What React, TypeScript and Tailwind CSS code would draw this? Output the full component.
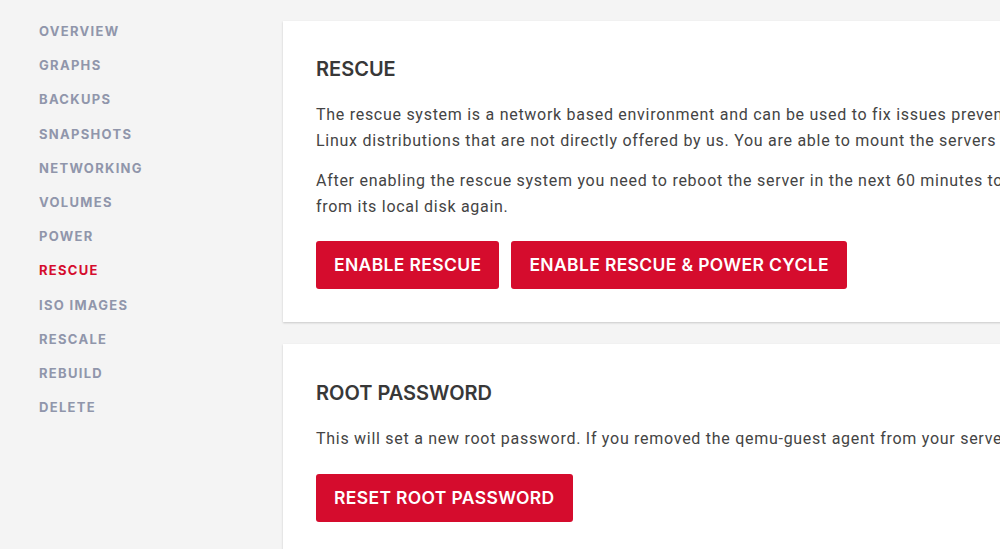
import React from "react";

const navItems = [
  "Overview",
  "Graphs",
  "Backups",
  "Snapshots",
  "Networking",
  "Volumes",
  "Power",
  "Rescue",
  "ISO Images",
  "Rescale",
  "Rebuild",
  "Delete",
];

const heading = { fontFamily: "Inter, 'DejaVu Sans', sans-serif" };

function RedButton({ label }: { label: string }) {
  return (
    <button
      className="h-12 px-[18px] rounded-[3px] bg-[#d50c2d] text-white text-[17.5px] font-semibold uppercase tracking-[0.02em]"
      style={heading}
    >
      {label}
    </button>
  );
}

export default function App() {
  return (
    <div
      className="w-[1000px] h-[549px] overflow-hidden bg-[#f4f4f4] flex"
      style={{ fontFamily: "Roboto, 'Liberation Sans', sans-serif" }}
    >
      {/* Sidebar */}
      <nav className="w-[283px] shrink-0 pl-[39px] pt-[22px]">
        <ul className="flex flex-col">
          {navItems.map((item) => (
            <li
              key={item}
              className={`h-[34.2px] text-[13px] font-bold uppercase tracking-[0.1em] ${
                item === "Rescue" ? "text-[#d50c2d]" : "text-[#9096ab]"
              }`}
              style={heading}
            >
              {item}
            </li>
          ))}
        </ul>
      </nav>

      {/* Main */}
      <main className="flex-1 pt-[21px] min-w-0">
        <div className="w-[1100px] flex flex-col gap-[22px]">
          <section className="bg-white shadow-[0_1px_2px_rgba(0,0,0,0.18)] pl-[33px] pt-[36px] pb-[33px]">
            <h2
              className="text-[20px] font-semibold text-[#383838] uppercase leading-6"
              style={heading}
            >
              Rescue
            </h2>
            <p className="mt-[21px] text-[16px] leading-[26px] tracking-[0.045em] text-[#444] whitespace-nowrap">
              The rescue system is a network based environment and can be used to fix issues preventing a regular boot, or to install
              <br />
              Linux distributions that are not directly offered by us. You are able to mount the servers local disk and make changes to it.
            </p>
            <p className="mt-[14px] text-[16px] leading-[26px] tracking-[0.045em] text-[#444] whitespace-nowrap">
              After enabling the rescue system you need to reboot the server in the next 60 minutes to boot into it. Otherwise the server will boot
              <br />
              from its local disk again.
            </p>
            <div className="mt-[21px] flex gap-3">
              <RedButton label="Enable Rescue" />
              <RedButton label="Enable Rescue & Power Cycle" />
            </div>
          </section>

          <section className="bg-white shadow-[0_1px_2px_rgba(0,0,0,0.18)] pl-[33px] pt-[37px] pb-[33px]">
            <h2
              className="text-[20px] font-semibold text-[#383838] uppercase leading-6"
              style={heading}
            >
              Root Password
            </h2>
            <p className="mt-[21px] text-[16px] leading-[26px] tracking-[0.045em] text-[#444] whitespace-nowrap">
              This will set a new root password. If you removed the qemu-guest agent from your server, this will not work.
            </p>
            <div className="mt-[22px] flex gap-3">
              <RedButton label="Reset Root Password" />
            </div>
          </section>
        </div>
      </main>
    </div>
  );
}
